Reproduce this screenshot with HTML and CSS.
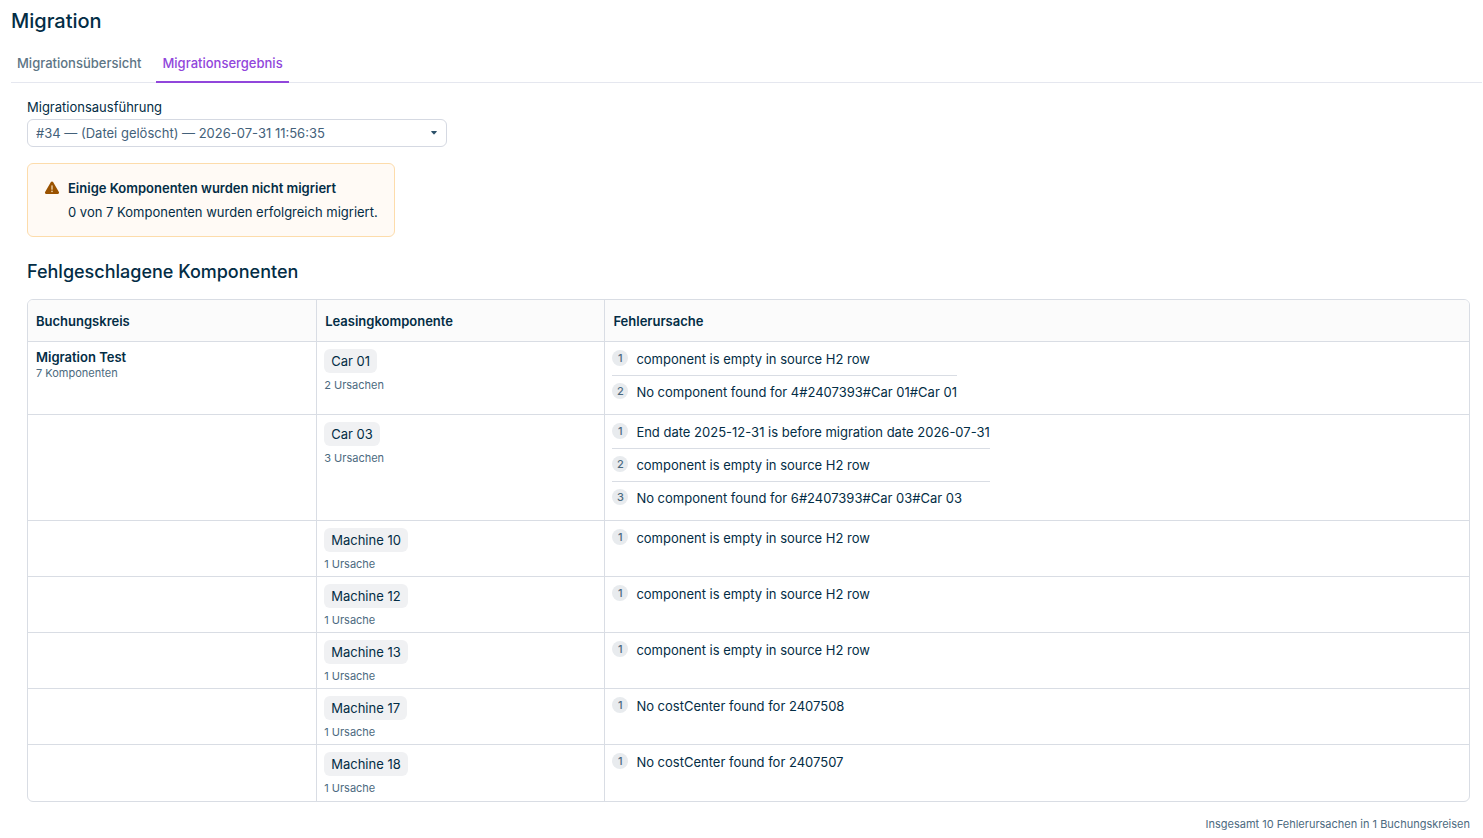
FILE: index.html
```html
<!DOCTYPE html>
<html lang="de">
<head>
    <meta charset="UTF-8">
    <meta name="viewport" content="width=device-width, initial-scale=1.0">
    <title>Migration</title>
    <link rel="stylesheet" href="styles.css">
</head>
<body>
    <h1>Migration</h1>

    <nav class="tabs">
        <a href="#uebersicht">Migrationsübersicht</a>
        <a href="#ergebnis" class="active">Migrationsergebnis</a>
    </nav>

    <main>
        <label for="execution">Migrationsausführung</label>
        <div class="select-box">
            <select id="execution">
                <option>#34 — (Datei gelöscht) — 2026-07-31 11:56:35</option>
            </select>
            <svg class="caret" viewBox="0 0 6 4" width="6" height="4"><path d="M0.6 0h4.8q.6.2.3.7L3.4 3.2q-.4.4-.8 0L.3.7Q0 .2.6 0z" fill="#2c5169"/></svg>
        </div>

        <div class="alert">
            <svg viewBox="0 0 16 16" width="16" height="16">
                <path d="M8 1.5c.5 0 .9.2 1.1.6l5.8 10c.5.9-.1 1.9-1.1 1.9H2.2c-1 0-1.6-1-1.1-1.9l5.8-10c.2-.4.6-.6 1.1-.6z" fill="#9a5200"/>
                <path d="M8 5.8v3.4" stroke="#f3d9b4" stroke-width="1.3" stroke-linecap="round"/>
                <circle cx="8" cy="11.4" r=".8" fill="#f3d9b4"/>
            </svg>
            <div>
                <strong>Einige Komponenten wurden nicht migriert</strong>
                <p>0 von 7 Komponenten wurden erfolgreich migriert.</p>
            </div>
        </div>

        <h2>Fehlgeschlagene Komponenten</h2>

        <table>
            <thead>
                <tr>
                    <th class="narrow">Buchungskreis</th>
                    <th class="narrow">Leasingkomponente</th>
                    <th>Fehlerursache</th>
                </tr>
            </thead>
            <tbody>
                <tr>
                    <td><strong>Migration Test</strong><small>7 Komponenten</small></td>
                    <td><span class="chip">Car 01</span><small>2 Ursachen</small></td>
                    <td class="causes">
                        <ol>
                            <li><span class="number">1</span>component is empty in source H2 row</li>
                            <li><span class="number">2</span>No component found for 4#2407393#Car 01#Car 01</li>
                        </ol>
                    </td>
                </tr>
                <tr>
                    <td></td>
                    <td><span class="chip">Car 03</span><small>3 Ursachen</small></td>
                    <td class="causes">
                        <ol>
                            <li><span class="number">1</span>End date 2025-12-31 is before migration date 2026-07-31</li>
                            <li><span class="number">2</span>component is empty in source H2 row</li>
                            <li><span class="number">3</span>No component found for 6#2407393#Car 03#Car 03</li>
                        </ol>
                    </td>
                </tr>
                <tr>
                    <td></td>
                    <td><span class="chip">Machine 10</span><small>1 Ursache</small></td>
                    <td class="causes"><ol><li><span class="number">1</span>component is empty in source H2 row</li></ol></td>
                </tr>
                <tr>
                    <td></td>
                    <td><span class="chip">Machine 12</span><small>1 Ursache</small></td>
                    <td class="causes"><ol><li><span class="number">1</span>component is empty in source H2 row</li></ol></td>
                </tr>
                <tr>
                    <td></td>
                    <td><span class="chip">Machine 13</span><small>1 Ursache</small></td>
                    <td class="causes"><ol><li><span class="number">1</span>component is empty in source H2 row</li></ol></td>
                </tr>
                <tr>
                    <td></td>
                    <td><span class="chip">Machine 17</span><small>1 Ursache</small></td>
                    <td class="causes"><ol><li><span class="number">1</span>No costCenter found for 2407508</li></ol></td>
                </tr>
                <tr>
                    <td></td>
                    <td><span class="chip">Machine 18</span><small>1 Ursache</small></td>
                    <td class="causes"><ol><li><span class="number">1</span>No costCenter found for 2407507</li></ol></td>
                </tr>
            </tbody>
        </table>

        <p class="total">Insgesamt 10 Fehlerursachen in 1 Buchungskreisen</p>
    </main>
</body>
</html>
```
FILE: styles.css
```css
* {
    box-sizing: border-box;
}

body {
    font-family: Inter, "Liberation Sans", sans-serif;
    font-size: 13px;
    line-height: 16px;
    margin: 0;
    padding: 8px 1px 4px 11px;
    color: #032d45;
    background-color: #fff;
}

h1 {
    font-size: 20px;
    line-height: 26px;
    font-weight: 500;
    margin: 0 0 12px;
}

h2 {
    font-size: 18px;
    line-height: 24px;
    font-weight: 500;
    margin: 23px 0 15px;
}

strong {
    font-weight: 600;
}

.tabs {
    display: flex;
    gap: 9px;
    border-bottom: 1px solid #e5e7ef;
}

.tabs a {
    padding: 9px 6px 10px;
    margin-bottom: -1px;
    border-bottom: 2px solid transparent;
    color: #5d7585;
    font-weight: 500;
    text-decoration: none;
}

.tabs a.active {
    color: #9146db;
    border-bottom-color: #9146db;
}

main {
    padding: 16px 12px 0 16px;
}

label {
    display: block;
    margin-bottom: 4px;
}

.select-box {
    position: relative;
    max-width: 420px;
}

select {
    display: block;
    width: 100%;
    height: 28px;
    padding: 0 24px 0 8px;
    border: 1px solid #d5d9e2;
    border-radius: 6px;
    background-color: #fff;
    color: #43617a;
    font: inherit;
    appearance: none;
}

.caret {
    position: absolute;
    right: 10px;
    top: 12px;
}

.alert {
    display: flex;
    gap: 8px;
    width: fit-content;
    margin-top: 16px;
    padding: 16px;
    border: 1px solid #fddcab;
    border-radius: 6px;
    background-color: #fffaf5;
}

.alert strong {
    display: block;
}

.alert p {
    margin: 8px 0 0;
}

table {
    width: 100%;
    table-layout: fixed;
    border: 1px solid #d9dde4;
    border-radius: 6px;
    border-spacing: 0;
    overflow: hidden;
}

th {
    height: 41px;
    padding: 0 8px;
    background-color: #fbfbfb;
    font-weight: 600;
    text-align: left;
}

th.narrow {
    width: 20%;
}

td {
    padding: 7px 7px 4px;
    border-top: 1px solid #d9dde4;
    vertical-align: top;
}

td:first-child {
    padding-left: 8px;
}

th + th, td + td {
    border-left: 1px solid #d9dde4;
}

tr:last-child td {
    padding-bottom: 5px;
}

td strong {
    display: block;
}

small {
    display: block;
    font-size: 11px;
    color: #4c6a80;
}

.chip {
    display: block;
    width: fit-content;
    margin-bottom: 4px;
    padding: 4px 7px;
    border-radius: 6px;
    background-color: #f0f1f3;
}

td.causes {
    padding: 1px 7px 6px;
}

ol {
    width: fit-content;
    margin: 0;
    padding: 0;
    list-style: none;
}

li {
    display: flex;
    gap: 8px;
    padding: 7px 0;
    line-height: 18px;
}

li + li {
    border-top: 1px solid #d9dde4;
}

.number {
    width: 16px;
    height: 16px;
    border-radius: 50%;
    background-color: #e8ebee;
    color: #4c6a80;
    font-size: 11px;
    line-height: 16px;
    font-weight: 500;
    text-align: center;
}

.total {
    margin: 14px 0 0;
    font-size: 11px;
    color: #4c6a80;
    text-align: right;
}
```
